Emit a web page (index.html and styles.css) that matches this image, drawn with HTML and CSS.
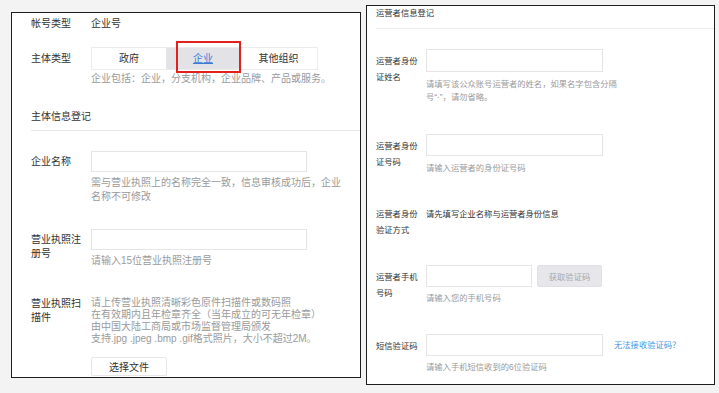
FILE: index.html
```html
<!DOCTYPE html>
<html lang="zh-CN">
<head>
<meta charset="utf-8">
<title>注册信息</title>
<link rel="stylesheet" href="styles.css">
</head>
<body>
<div class="page">
  <section class="panel panel-left">
    <div class="row row-account">
      <div class="label">帐号类型</div>
      <div class="value">企业号</div>
    </div>
    <div class="row row-type">
      <div class="label label-tall">主体类型</div>
      <div class="value">
        <div class="seg">
          <span class="seg-item seg-gov">政府</span>
          <span class="seg-item seg-biz is-active"><a href="#">企业</a></span>
          <span class="seg-item seg-other">其他组织</span>
          <span class="highlight"></span>
        </div>
        <p class="hint hint-type">企业包括：企业，分支机构，企业品牌、产品或服务。</p>
      </div>
    </div>
    <h3 class="section-title">主体信息登记</h3>
    <div class="row row-name">
      <div class="label label-pad">企业名称</div>
      <div class="value">
        <div class="input input-left"></div>
        <p class="hint hint-wrap">需与营业执照上的名称完全一致，信息审核成功后，企业名称不可修改</p>
      </div>
    </div>
    <div class="row row-reg">
      <div class="label label-pad">营业执照注册号</div>
      <div class="value">
        <div class="input input-left"></div>
        <p class="hint">请输入15位营业执照注册号</p>
      </div>
    </div>
    <div class="row row-scan">
      <div class="label">营业执照扫描件</div>
      <div class="value">
        <p class="hint hint-list">请上传营业执照清晰彩色原件扫描件或数码照<br>在有效期内且年检章齐全（当年成立的可无年检章）<br>由中国大陆工商局或市场监督管理局颁发<br>支持.jpg .jpeg .bmp .gif格式照片，大小不超过2M。</p>
        <button class="file-btn" type="button">选择文件</button>
      </div>
    </div>
  </section>

  <section class="panel panel-right">
    <h3 class="section-title section-title-sm">运营者信息登记</h3>
    <div class="frow frow-1">
      <div class="flabel">运营者身份证姓名</div>
      <div class="fvalue">
        <div class="input input-right"></div>
        <p class="fhint fhint-wrap">请填写该公众账号运营者的姓名，如果名字包含分隔号“·”，请勿省略。</p>
      </div>
    </div>
    <div class="frow frow-2">
      <div class="flabel">运营者身份证号码</div>
      <div class="fvalue">
        <div class="input input-right input-22"></div>
        <p class="fhint">请输入运营者的身份证号码</p>
      </div>
    </div>
    <div class="frow frow-3">
      <div class="flabel">运营者身份验证方式</div>
      <div class="fvalue">
        <p class="ftext">请先填写企业名称与运营者身份信息</p>
      </div>
    </div>
    <div class="frow frow-4">
      <div class="flabel">运营者手机号码</div>
      <div class="fvalue">
        <div class="inline">
          <div class="input input-phone input-22"></div>
          <button class="code-btn" type="button">获取验证码</button>
        </div>
        <p class="fhint fhint-tight">请输入您的手机号码</p>
      </div>
    </div>
    <div class="frow frow-5">
      <div class="flabel">短信验证码</div>
      <div class="fvalue">
        <div class="inline">
          <div class="input input-right input-22"></div>
          <a class="help-link" href="#">无法接收验证码？</a>
        </div>
        <p class="fhint fhint-tight">请输入手机短信收到的6位验证码</p>
      </div>
    </div>
  </section>
</div>
</body>
</html>
```

FILE: styles.css
```css
* { box-sizing: border-box; }
html, body {
  margin: 0;
  padding: 0;
  background: #f3f3f3;
  font-family: "Liberation Sans", "Noto Sans CJK SC", sans-serif;
  color: #333;
}
p, h3 { margin: 0; }

.page {
  display: flex;
  align-items: flex-start;
  width: 719px;
  height: 393px;
}

.panel {
  background: #fff;
  border: 1px solid #1e1e1e;
}

/* ---------- left panel ---------- */
.panel-left {
  width: 350px;
  height: 366px;
  margin: 12px 0 0 11px;
  padding: 4px 0 0 19px;
  font-size: 10px;
}

.row {
  display: grid;
  grid-template-columns: 60px 1fr;
}
.label {
  width: 52px;
  line-height: 14px;
  color: #333;
}
.label-tall { line-height: 23px; }
.label-pad { padding-top: 4px; }
.value { line-height: 14px; }

.row-type { margin-top: 16px; }
.row-name { margin-top: 20px; }
.row-reg { margin-top: 25px; }
.row-scan { margin-top: 29px; }

.seg {
  position: relative;
  display: flex;
  width: 227px;
  height: 23px;
  border: 1px solid #ececec;
}
.seg-item {
  display: flex;
  align-items: center;
  justify-content: center;
  color: #333;
}
.seg-gov { width: 75px; border-right: 1px solid #e6e6e6; }
.seg-biz { width: 73px; border-right: 1px solid #e6e6e6; }
.seg-other { flex: 1; }
.seg-item.is-active { background: #e3e3e7; }
.seg-item a {
  color: #3d7ad8;
  text-decoration: underline;
}
.highlight {
  position: absolute;
  left: 84px;
  top: -7px;
  width: 65px;
  height: 32px;
  border: 2px solid #e3201c;
}

.hint {
  color: #9a9a9a;
  line-height: 14px;
  margin-top: 4px;
}
.hint-type { margin-top: 2px; }
.hint-wrap { width: 253px; }
.hint-list { margin-top: 0; line-height: 12px; }

.section-title {
  font-size: 10px;
  font-weight: normal;
  line-height: 14px;
  color: #333;
  margin-top: 24px;
  padding-bottom: 6px;
  border-bottom: 1px solid #e9e9e9;
}

.input {
  height: 21px;
  background: #fff;
  border: 1px solid #e5e5e5;
}
.input-left { width: 216px; }

.file-btn {
  display: block;
  margin-top: 12px;
  width: 76px;
  height: 19px;
  padding: 0;
  background: #fff;
  border: 1px solid #e6e6e6;
  border-radius: 2px;
  font-family: inherit;
  font-size: 10px;
  color: #333;
}

/* ---------- right panel ---------- */
.panel-right {
  width: 349px;
  height: 380px;
  margin: 5px 0 0 5px;
  padding: 1px 0 0 9px;
  font-size: 8.3px;
}
.section-title-sm {
  font-size: 8.3px;
  line-height: 12px;
  margin-top: 0;
  padding-bottom: 9px;
  border-bottom: 1px solid #ececec;
}

.frow {
  display: grid;
  grid-template-columns: 50px 1fr;
}
.frow-1 { margin-top: 20px; }
.frow-2 { margin-top: 30px; }
.frow-3 { margin-top: 27px; }
.frow-4 { margin-top: 27px; }
.frow-5 { margin-top: 29px; }

.flabel {
  width: 44px;
  padding-top: 4px;
  line-height: 16px;
  color: #333;
}
.fvalue { line-height: 13px; }

.input-right { width: 177px; height: 23px; }
.input-22 { height: 22px; }
.input-phone { width: 106px; }

.fhint {
  color: #9a9a9a;
  margin-top: 6px;
  line-height: 13px;
}
.fhint-tight { margin-top: 5px; }
.fhint-wrap { width: 195px; }

.ftext {
  padding-top: 4px;
  line-height: 16px;
  color: #333;
}

.inline {
  display: flex;
  align-items: center;
}
.code-btn {
  margin-left: 5px;
  width: 65px;
  height: 22px;
  padding: 0;
  background: #e7e7eb;
  border: 1px solid #e0e0e4;
  border-radius: 2px;
  font-family: inherit;
  font-size: 8.3px;
  color: #a8a8ad;
}
.help-link {
  margin-left: 11px;
  color: #3f95e6;
  text-decoration: none;
}
```
